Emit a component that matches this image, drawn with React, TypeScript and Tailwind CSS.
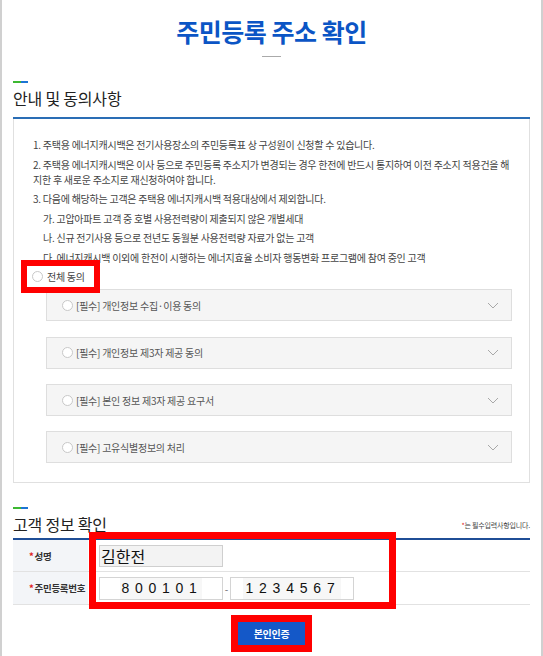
import React from "react";

function SectionHead({ title, mtClass, right }: { title: string; mtClass: string; right?: React.ReactNode }) {
  return (
    <div>
      <div className={`${mtClass} flex h-[2px] w-[15px]`}>
        <div className="w-[8px] bg-[#3cb832]" />
        <div className="w-[7px] bg-[#1c74d4]" />
      </div>
      <div className="flex items-end justify-between">
        <h2 className="mt-[5px] text-[16px] leading-[20px] text-[#222] tracking-[-0.2px]">{title}</h2>
        {right}
      </div>
    </div>
  );
}

function Circle() {
  return <span className="inline-block h-[11px] w-[11px] shrink-0 rounded-full border border-[#c8c8c8] bg-white" />;
}

function Chevron() {
  return (
    <svg width="12" height="7" viewBox="0 0 12 7" fill="none">
      <polyline points="1,1 6,6 11,1" stroke="#a8a8a8" strokeWidth="1" />
    </svg>
  );
}

const accordions = [
  "[필수] 개인정보 수집·이용 동의",
  "[필수] 개인정보 제3자 제공 동의",
  "[필수] 본인 정보 제3자 제공 요구서",
  "[필수] 고유식별정보의 처리",
];

export default function App() {
  return (
    <div className="relative w-full font-['Noto_Sans_CJK_KR','Noto_Sans',sans-serif]">
      <div className="min-h-[656px] w-full border-x-2 border-[#d0d0d0] bg-white px-[11px] pt-[16px] pb-[10px]">
        <h1 className="text-center text-[25px] font-bold leading-[30px] tracking-[-0.5px] text-[#0b55c5]">
          주민등록 주소 확인
        </h1>
        <div className="mx-auto mt-[10px] h-px w-[19px] bg-[#aaaaaa]" />

        <SectionHead title="안내 및 동의사항" mtClass="mt-[24px]" />
        <div className="mt-[9px] h-[2px] bg-[#2a6db5]" />

        <div className="border-x border-b border-[#e0e0e0] pt-[18px] pb-[19px] pl-[19px] pr-[15px]">
          <div className="flex flex-col gap-[4.6px] text-[10px] leading-[15px] tracking-[-0.25px] text-[#444]">
            <p>1. 주택용 에너지캐시백은 전기사용장소의 주민등록표 상 구성원이 신청할 수 있습니다.</p>
            <p>
              2. 주택용 에너지캐시백은 이사 등으로 주민등록 주소지가 변경되는 경우 한전에 반드시 통지하여 이전 주소지 적용건을 해지한 후 새로운 주소지로 재신청하여야 합니다.
            </p>
            <p>3. 다음에 해당하는 고객은 주택용 에너지캐시백 적용대상에서 제외합니다.</p>
            <p className="pl-[10px]">가. 고압아파트 고객 중 호별 사용전력량이 제출되지 않은 개별세대</p>
            <p className="pl-[10px]">나. 신규 전기사용 등으로 전년도 동월분 사용전력량 자료가 없는 고객</p>
            <p className="pl-[10px]">다. 에너지캐시백 이외에 한전이 시행하는 에너지효율 소비자 행동변화 프로그램에 참여 중인 고객</p>
          </div>
          <div className="mt-[3.5px] -ml-[1px] flex h-[16px] items-center gap-[4px]">
            <Circle />
            <span className="text-[10px] tracking-[-0.3px] text-[#444]">전체 동의</span>
          </div>
          <div className="mt-[5px] ml-[13px] mr-[2px] flex flex-col gap-[15.3px]">
            {accordions.map((a) => (
              <div
                key={a}
                className="flex h-[32px] items-center justify-between border border-[#dedede] bg-[#f5f5f5] pl-[15px] pr-[12px]"
              >
                <div className="flex items-center gap-[3px]">
                  <Circle />
                  <span className="text-[10px] tracking-[-0.25px] text-[#555]">{a}</span>
                </div>
                <Chevron />
              </div>
            ))}
          </div>
        </div>

        <SectionHead
          title="고객 정보 확인"
          mtClass="mt-[24px]"
          right={
            <span className="mb-[4px] text-[7px] leading-[10px] tracking-[-0.2px] text-[#444]">
              <span className="text-[#e02020]">*</span>는 필수입력사항입니다.
            </span>
          }
        />
        <div className="mt-[4px] h-[2px] bg-[#1f4e96]" />

        <div className="flex h-[32px] border-b border-[#e2e2e2]">
          <div className="flex w-[75px] items-center bg-[#f3f5f8] pl-[16px] text-[9.5px] font-bold tracking-[-0.3px] text-[#333]">
            <span className="mr-[1px] text-[#e02020]">*</span>성명
          </div>
          <div className="ml-[11px] flex items-center">
            <div className="flex h-[22px] w-[124px] items-center border border-[#cfcfcf] bg-[#f3f3f3] pl-[1px] text-[16px] text-[#111]">
              김한전
            </div>
          </div>
        </div>
        <div className="flex h-[33px] border-b border-[#e2e2e2]">
          <div className="flex w-[75px] items-center bg-[#f3f5f8] pl-[16px] text-[9.5px] font-bold tracking-[-0.3px] text-[#333]">
            <span className="mr-[1px] text-[#e02020]">*</span>주민등록번호
          </div>
          <div className="ml-[11px] flex items-center">
            <div className="flex h-[23px] w-[124px] items-center justify-center border border-[#d4d4d4] bg-white font-['Liberation_Sans',sans-serif] text-[14px] text-[#111]">
              <span className="bg-[#f7f7f7] pl-[2px] tracking-[5.7px]">800101</span>
            </div>
            <span className="w-[7px] text-center text-[10px] text-[#666]">-</span>
            <div className="flex h-[23px] w-[124px] items-center justify-center border border-[#d4d4d4] bg-white font-['Liberation_Sans',sans-serif] text-[14px] text-[#111]">
              <span className="bg-[#f7f7f7] pl-[2px] tracking-[5.8px]">1234567</span>
            </div>
          </div>
        </div>

        <div className="mt-[17px] flex justify-center">
          <button className="h-[23px] w-[68px] bg-[#1458c8] text-[10px] font-bold tracking-[-0.3px] text-white">
            본인인증
          </button>
        </div>
      </div>

      <div className="pointer-events-none absolute left-[21px] top-[260px] h-[33px] w-[79px] border-[6px] border-[#ff0000]" />
      <div className="pointer-events-none absolute left-[89px] top-[532px] h-[77px] w-[307px] border-[7px] border-[#ff0000]" />
      <div className="pointer-events-none absolute left-[231px] top-[615px] h-[37px] w-[81px] border-[7px] border-[#ff0000]" />
    </div>
  );
}
